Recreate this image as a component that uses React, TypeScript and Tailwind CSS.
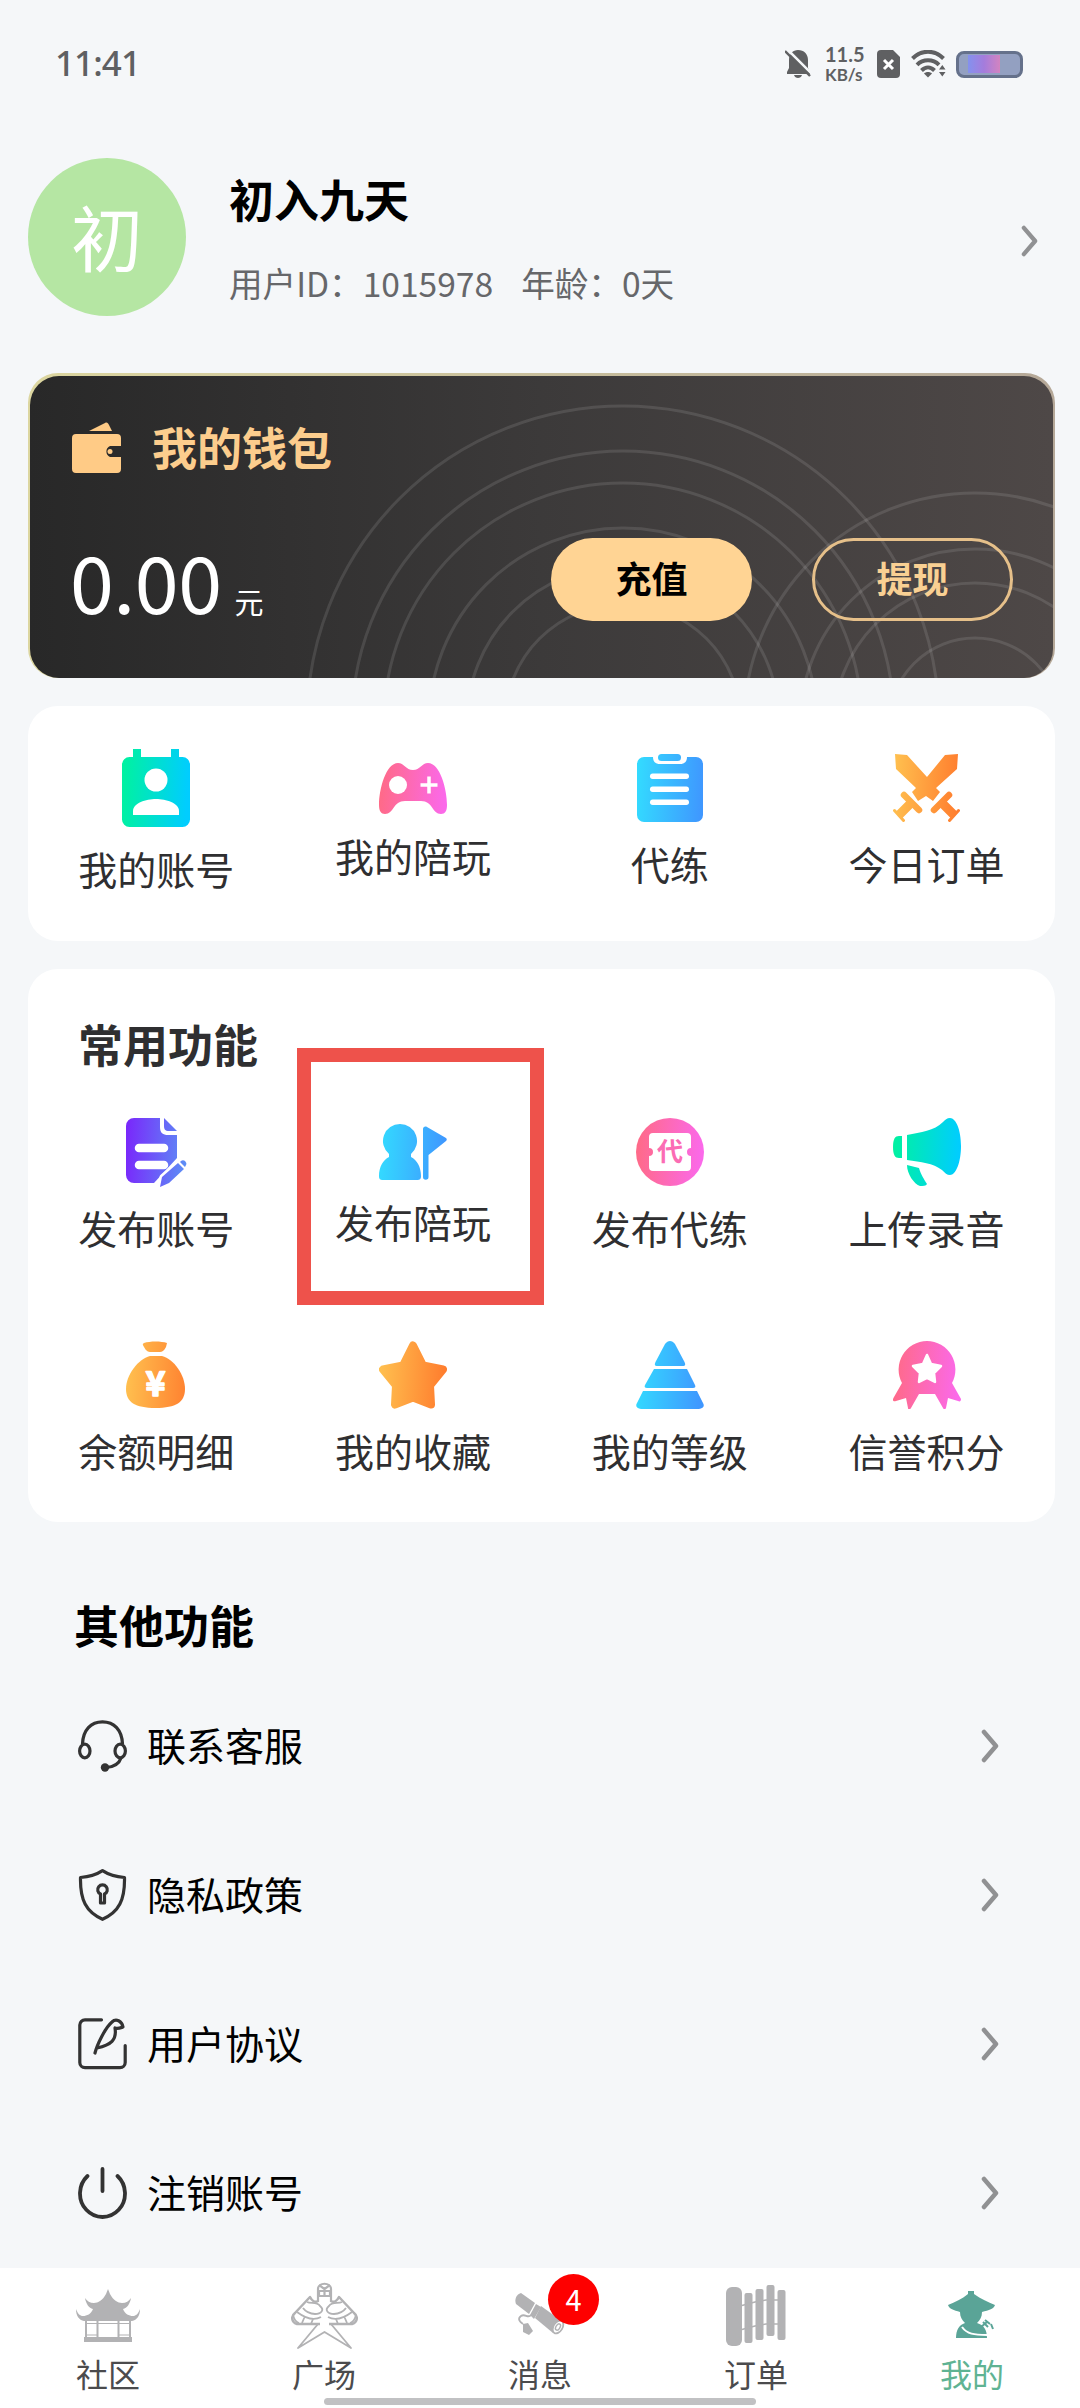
import type { ReactNode } from "react";

type Feature = {
    label: string;
    icon: ReactNode;
    offset: string;
};

type MenuEntry = {
    label: string;
    icon: ReactNode;
};

type Tab = {
    label: string;
    icon: ReactNode;
    badge?: number;
    active?: boolean;
};

const gradients = [
    { id: "g-green", from: "#00f39d", to: "#00cdff" },
    { id: "g-pink", from: "#ff6a84", to: "#fb69ea" },
    { id: "g-blue", from: "#33dcff", to: "#3f97ff" },
    { id: "g-orange", from: "#ffc250", to: "#ff7d2e" },
    { id: "g-purple", from: "#7a26fb", to: "#5a98f5" },
];

function GradientDefs() {
    return (
        <svg width="0" height="0" className="absolute">
            <defs>
                {gradients.map((g) => (
                    <linearGradient key={g.id} id={g.id} gradientUnits="userSpaceOnUse" x1="0" y1="0" x2="68" y2="4">
                        <stop offset="0" stopColor={g.from} />
                        <stop offset="1" stopColor={g.to} />
                    </linearGradient>
                ))}
            </defs>
        </svg>
    );
}

/* ---------- feature icons ---------- */

function AccountIcon() {
    return (
        <svg width="68" height="78" viewBox="0 0 68 78" fill="url(#g-green)">
            <path d="M11 0h8v8h30V0h8v8h3.500a7.500 7.500 0 0 1 7.500 7.500v55a7.500 7.500 0 0 1-7.500 7.500h-53A7.500 7.500 0 0 1 0 70.500v-55A7.500 7.500 0 0 1 7.500 8H11Z" />
            <circle cx="34" cy="31" r="11.500" fill="#fff" />
            <path d="M11 66v-4c0-8 13-12 23-12s23 4 23 12v4Z" fill="#fff" />
        </svg>
    );
}

function GamepadIcon() {
    return (
        <svg width="68" height="51" viewBox="0 0 68 51" fill="url(#g-pink)">
            <path d="M19 0c6 0 8 7 15 7s9-7 15-7c12 0 19 26 19 42 0 6-2 9-6 9-9 0-8-13-20-13H26C14 38 15 51 6 51c-4 0-6-3-6-9C0 26 7 0 19 0Z" />
            <circle cx="19" cy="22" r="9" fill="#fff" />
            <path d="M50 13.500v17M41.500 22h17" stroke="#fff" strokeWidth="3.500" />
        </svg>
    );
}

function ClipboardIcon() {
    return (
        <svg width="66" height="68" viewBox="0 0 66 68" fill="url(#g-blue)">
            <path d="M7 3h9c0 5 3 7 7 7h20c4 0 7-2 7-7h9a7 7 0 0 1 7 7v51a7 7 0 0 1-7 7H7a7 7 0 0 1-7-7V10a7 7 0 0 1 7-7Z" />
            <rect x="21" y="0" width="23" height="7" rx="3.500" />
            <g fill="#fff">
                <rect x="13" y="19.500" width="39" height="5.500" rx="2.700" />
                <rect x="13" y="32.500" width="39" height="5.500" rx="2.700" />
                <rect x="13" y="45.500" width="39" height="5.500" rx="2.700" />
            </g>
        </svg>
    );
}

function SwordsIcon() {
    return (
        <svg width="67" height="68" viewBox="0 0 67 68" fill="url(#g-orange)">
            <path d="M2 0l12 1 20 22L52 1l13-1-1 15-21 19 4 4-7 9-7-5-8 5-6-9 4-4L3 15Z" />
            <g stroke="url(#g-orange)" strokeLinecap="round">
                <path d="M11 41l15 15M56 41L41 56" strokeWidth="6.500" />
                <path d="M18 49L6 61M49 49l12 12" strokeWidth="9" strokeLinecap="butt" />
                <path d="M1.500 56.500l9 10M65.500 56.500l-9 10" strokeWidth="3" />
            </g>
        </svg>
    );
}

function PostAccountIcon() {
    return (
        <svg width="61" height="70" viewBox="0 0 61 70" fill="url(#g-purple)" className="-mb-0.5">
            <path d="M8 0h26v9c0 6 3 8 8 8h9v23L28 65H8a8 8 0 0 1-8-8V8a8 8 0 0 1 8-8Z" />
            <path d="M38 0l13 13h-8c-4 0-5-2-5-5Z" />
            <path d="M13 30h25M13 47h25" stroke="#fff" strokeWidth="8.500" strokeLinecap="round" />
            {/* pencil with a white outline that cuts it out of the sheet */}
            <path
                d="M52 45l6 6-15 14-9 4 2-10ZM55 43c1-1 3-1 4 0s2 3 1 4l-1 2-5-5Z"
                stroke="#fff"
                strokeWidth="5"
                strokeLinejoin="round"
                paintOrder="stroke"
            />
        </svg>
    );
}

function CompanionIcon() {
    return (
        <svg width="68" height="56" viewBox="0 0 68 56" fill="url(#g-blue)">
            <path d="M21 0a17 17 0 0 1 11 30v3c6 3 10 10 10 19 0 3-1 4-4 4H4c-3 0-4-1-4-4 0-9 4-16 10-19v-3A17 17 0 0 1 21 0Z" />
            <path d="M44 5c0-2 2-3 4-2l19 11c1 1 1 2 0 3L49.500 31v22a2.750 2.750 0 0 1-5.500 0Z" />
        </svg>
    );
}

function TicketIcon() {
    return (
        <svg width="68" height="68" viewBox="0 0 68 68">
            <circle cx="34" cy="34" r="34" fill="url(#g-pink)" />
            <path
                d="M17 15h34a4 4 0 0 1 4 4v11a4 4 0 0 0 0 8v11a4 4 0 0 1-4 4H17a4 4 0 0 1-4-4V38a4 4 0 0 0 0-8V19a4 4 0 0 1 4-4Z"
                fill="#fff"
            />
            <text x="34" y="43" fontSize="26" fontWeight="700" textAnchor="middle" fill="#fb6cb4">
                代
            </text>
        </svg>
    );
}

function MegaphoneIcon() {
    return (
        <svg width="68" height="68" viewBox="0 0 68 68" fill="url(#g-green)">
            <path d="M9 18v22H6c-4 0-6-3-6-11S2 18 6 18Z" />
            <path d="M14 17c14-3 27-4 36-13 2-2 4-4 7-4 6 0 11 12 11 28S63 57 57 57c-3 0-5-2-8-5-9-7-21-8-35-10Z" />
            <path d="M14 47l12 3c2 7 5 11 8 16-1 2-4 2-7 2-6-2-13-12-13-21Z" />
        </svg>
    );
}

function MoneyBagIcon() {
    return (
        <svg width="60" height="68" viewBox="0 0 60 68" fill="url(#g-orange)">
            <path d="M18 2c6-2 17-2 23 0l-1 4c-2 4-4 5-6 5h-9c-3 0-5-1-7-5-1-2-2-3 0-4Z" />
            <path d="M24 15h12c12 3 23 19 23 33 0 13-9 19-29.500 19S0 61 0 48c0-14 12-30 24-33Z" />
            <text x="29.500" y="54.500" fontSize="34" fontWeight="700" textAnchor="middle" fill="#fff" stroke="#fff" strokeWidth="1.500" strokeLinejoin="round">
                ¥
            </text>
        </svg>
    );
}

function StarIcon() {
    return (
        <svg width="68" height="68" viewBox="0 0 68 68">
            <path
                d="M34 4.500l10 20 20 4-13 16 1 19-18-7-18 7 1-19-13-16 20-4Z"
                fill="url(#g-orange)"
                stroke="url(#g-orange)"
                strokeWidth="8"
                strokeLinejoin="round"
            />
        </svg>
    );
}

function PyramidIcon() {
    return (
        <svg width="68" height="68" viewBox="0 0 68 68" fill="url(#g-blue)">
            <path d="M29 3c3-4 7-4 10 0l9.500 18c1 2 1 4-1 4h-27c-2 0-2-2-1-4Z" />
            <path d="M18 28h33l8 16c1 2 0 3-2 3H11c-2 0-3-1-2-3Z" />
            <path d="M7 50h54l6 12c2 3 0 6-4 6H5c-4 0-6-3-4-6Z" />
        </svg>
    );
}

function MedalIcon() {
    return (
        <svg width="68" height="68" viewBox="0 0 68 68" fill="url(#g-pink)">
            <path d="M34 0a28.500 28.500 0 0 1 25 42l9 16c0 2-1 3-3 2l-10-3-2 10c-1 2-2 2-3 0l-8-14H26l-8 14c-1 2-3 2-3 0l-2-10-10 3c-3 1-4-1-2-4l8-14A28.500 28.500 0 0 1 34 0Z" />
            <path
                d="M34 14l4 9 10 2-7 7 1 9-8-4-8 4 1-9-7-7 10-2Z"
                fill="#fff"
                stroke="#fff"
                strokeWidth="2.500"
                strokeLinejoin="round"
            />
        </svg>
    );
}

/* ---------- list icons ---------- */

function HeadsetIcon() {
    return (
        <svg width="49" height="52" viewBox="0 0 49 52" fill="none" stroke="#333" strokeWidth="3.200">
            <ellipse cx="6.800" cy="31" rx="5.200" ry="6.800" />
            <ellipse cx="42.200" cy="31" rx="5.200" ry="6.800" />
            <path d="M4.500 24C5 10 13 1.800 24.500 1.800S44 10 44.500 24M43 38c-2 6-7 9-15 9.500" />
            <circle cx="27" cy="47.500" r="4.200" fill="#333" stroke="none" />
        </svg>
    );
}

function ShieldIcon() {
    return (
        <svg width="49" height="52" viewBox="0 0 49 52" fill="none" stroke="#333" strokeWidth="3.200" strokeLinejoin="round">
            <path d="M24.500 1.700C18 6 10 8 2.500 8.500 2 31 8 43 24.500 50.300 41 43 47 31 46.500 8.500 39 8 31 6 24.500 1.700Z" />
            <path d="M22.500 25a4.800 4.800 0 1 1 4 0v9h-4Z" />
        </svg>
    );
}

function QuillIcon() {
    return (
        <svg
            width="49"
            height="52"
            viewBox="0 0 49 52"
            fill="none"
            stroke="#333"
            strokeWidth="3.200"
            strokeLinecap="round"
            strokeLinejoin="round"
        >
            <path d="M23.500 1.800H7A5.200 5.200 0 0 0 1.800 7v37.500A5.200 5.200 0 0 0 7 49.700h35a5.200 5.200 0 0 0 5.200-5.200V27.500" />
            <path d="M17 35c2-8 10-25 17-31 4-4 10-1 11 5-3 1-5 2-8 1 2 12-4 17-18 20" />
        </svg>
    );
}

function PowerIcon() {
    return (
        <svg width="49" height="52" viewBox="0 0 49 52" fill="none" stroke="#333" strokeWidth="3.800" strokeLinecap="round">
            <path d="M24.500 2v22M9.500 9a22.500 23.500 0 1 0 30 0" />
        </svg>
    );
}

/* ---------- tab bar icons ---------- */

function PavilionIcon() {
    return (
        <svg width="64" height="53" viewBox="0 0 64 53" fill="#b2b2b4">
            <path d="M32 0l2 5c3 6 8 9 12 9 4 0 7-2 9-5-1 6-4 10-8 11 2 5 6 7 10 7 3 0 5-2 7-7 0 7-3 11-8 12H8c-5-1-8-5-8-12 2 5 4 7 7 7 4 0 8-2 10-7-4-1-7-5-8-11 2 3 5 5 9 5 4 0 9-3 12-9Z" />
            <path d="M8 48h48v5H8Z" />
            <path d="M10 32v16M21.500 32v16M42.500 32v16M54 32v16" stroke="#b2b2b4" strokeWidth="2" />
            <path d="M10 34.500h44M10 46h11M43 46h11" stroke="#b2b2b4" strokeWidth="1.200" />
        </svg>
    );
}

function KiteIcon() {
    return (
        <svg width="67" height="67" viewBox="0 0 67 67" fill="none" stroke="#b2b2b4" strokeWidth="1.800" strokeLinejoin="round">
            <path d="M27 20V7c0-7 13-7 13 0v13M28 3l5.500 4L39 3M28 9h11v5H28ZM33.500 9v5" strokeWidth="2.200" />
            <path d="M27 19c-3 2-6 0-8-4L4 31C0 34 0 40 6 42h23" strokeWidth="2.500" />
            <path d="M40 19c3 2 6 0 8-4l15 16c4 3 4 9-2 11H38" strokeWidth="2.500" />
            <path d="M16 20c4 2 10-1 13 4 5 4 1 8-5 8-5 0-10-3-12-6M6 30c8 6 17 9 24 5M2 33c1 4 2 7 6 8M14 34l-3 7M22 37l-2 5" />
            <path d="M51 20c-4 2-10-1-13 4-5 4-1 8 5 8 5 0 10-3 12-6M61 30c-8 6-17 9-24 5M65 33c-1 4-2 7-6 8M53 34l3 7M45 37l2 5" />
            <path d="M27 42L7 66l26.500-16L60 66 40 42" />
        </svg>
    );
}

function ScrollIcon() {
    return (
        <svg width="50" height="44" viewBox="0 0 50 44" fill="#b2b2b4">
            <path d="M6 0l14 10-6 11L1 11C-1 6 2 1 6 0Z" />
            <path d="M26 13l18 13-6 14-18-15Z" />
            <path d="M21 11l5 3-7 12-4-4Z" />
            <ellipse cx="43" cy="34" rx="4.500" ry="7" transform="rotate(32 43 34)" fill="#fff" stroke="#b2b2b4" strokeWidth="1.800" />
            <ellipse cx="43" cy="34" rx="2" ry="3.500" transform="rotate(32 43 34)" fill="none" stroke="#b2b2b4" strokeWidth="1.400" />
            <path d="M16 22c-3 4-6-2-10 1-4 3-1 6 2 8" fill="none" stroke="#b2b2b4" strokeWidth="1.800" />
            <path d="M8 31l5-1 5 8-4 4-6-3Z" />
        </svg>
    );
}

function BambooSlipsIcon() {
    return (
        <svg width="60" height="61" viewBox="0 0 60 61" fill="#b2b2b4">
            <rect x="0" y="2" width="16" height="59" rx="6" />
            <rect x="18.500" y="8" width="8" height="50" rx="2" />
            <rect x="29.500" y="4" width="8" height="51" rx="2" />
            <rect x="40.500" y="0" width="8" height="51" rx="2" />
            <rect x="51.500" y="5" width="8" height="50" rx="2" />
            <path d="M14 21l15-4 11-2h12M14 45l15-4 11-2h12" fill="none" stroke="#b2b2b4" strokeWidth="1.500" />
        </svg>
    );
}

function SwordsmanIcon() {
    return (
        <svg width="48" height="48" viewBox="0 0 48 48" fill="#5aa497">
            <path d="M20 0h6v3c7 5 14 8 21 11-1 4-6 5-13 7 0 5-2 8-5 11 7 2 10 7 10 15H8c0-8 3-13 9-15-3-3-5-6-5-11C6 19 1 18 0 14 7 11 14 8 20 3Z" />
            <path d="M14 36c5 7 12 8 25 8" fill="none" stroke="#fff" strokeWidth="2" />
            <path d="M33 36l6-5M35 31l5 5M37 29l5 4M43 33l2 5" stroke="#5aa497" strokeWidth="2" />
        </svg>
    );
}

function Chevron({ className }: { className: string }) {
    return (
        <svg className={className} viewBox="0 0 18 34" fill="none" stroke="#909193" strokeWidth="4.500" strokeLinecap="round" strokeLinejoin="round">
            <path d="M3 3l12 14L3 31" />
        </svg>
    );
}

const quickFeatures: Feature[] = [
    { label: "我的账号", icon: <AccountIcon />, offset: "pt-[43px]" },
    { label: "我的陪玩", icon: <GamepadIcon />, offset: "pt-[57px]" },
    { label: "代练", icon: <ClipboardIcon />, offset: "pt-12" },
    { label: "今日订单", icon: <SwordsIcon />, offset: "pt-12" },
];

const commonFeatures: Feature[] = [
    { label: "发布账号", icon: <PostAccountIcon />, offset: "pt-[43px]" },
    { label: "发布陪玩", icon: <CompanionIcon />, offset: "pt-[49px]" },
    { label: "发布代练", icon: <TicketIcon />, offset: "pt-[43px]" },
    { label: "上传录音", icon: <MegaphoneIcon />, offset: "pt-[43px]" },
    { label: "余额明细", icon: <MoneyBagIcon />, offset: "pt-[43px]" },
    { label: "我的收藏", icon: <StarIcon />, offset: "pt-[43px]" },
    { label: "我的等级", icon: <PyramidIcon />, offset: "pt-[43px]" },
    { label: "信誉积分", icon: <MedalIcon />, offset: "pt-[43px]" },
];

const menuEntries: MenuEntry[] = [
    { label: "联系客服", icon: <HeadsetIcon /> },
    { label: "隐私政策", icon: <ShieldIcon /> },
    { label: "用户协议", icon: <QuillIcon /> },
    { label: "注销账号", icon: <PowerIcon /> },
];

const tabs: Tab[] = [
    { label: "社区", icon: <PavilionIcon /> },
    { label: "广场", icon: <KiteIcon /> },
    { label: "消息", icon: <ScrollIcon />, badge: 4 },
    { label: "订单", icon: <BambooSlipsIcon /> },
    { label: "我的", icon: <SwordsmanIcon />, active: true },
];

function StatusBar() {
    return (
        <div className="flex h-[128px] items-center justify-between pl-[55px] pr-[57px] text-[#5f6062]">
            <span className="pb-[3px] font-['Noto_Sans','Noto_Sans_CJK_SC',sans-serif] text-[35px] font-medium leading-none tracking-[-0.9px]">
                11:41
            </span>
            <div className="flex items-center">
                <svg width="26" height="30" viewBox="0 0 26 30" fill="#5f6062">
                    <path d="M13 1c6 0 10 4 10 10v8l2 4v2H2v-2l2-4v-8C4 5 8 1 13 1ZM9 26h8c-1 4-7 4-8 0Z" />
                    <path d="M2 0l25 25" stroke="#f5f7f9" strokeWidth="2.500" />
                    <path d="M0 2l25 25" stroke="#5f6062" strokeWidth="2.400" />
                </svg>
                <div className="ml-[14px] flex w-[39px] flex-col font-['Lato',sans-serif] font-bold">
                    <span className="text-[20px] leading-[22px]">11.5</span>
                    <span className="whitespace-nowrap text-[17px] leading-[20px]">KB/s</span>
                </div>
                <svg className="ml-[13px]" width="23" height="28" viewBox="0 0 23 28">
                    <path d="M4 0h12l7 7v17a4 4 0 0 1-4 4H4a4 4 0 0 1-4-4V4a4 4 0 0 1 4-4Z" fill="#5f6062" />
                    <path d="M7 10l9 9M16 10l-9 9" stroke="#fff" strokeWidth="3" />
                </svg>
                <svg className="ml-[11px]" width="35" height="28" viewBox="0 0 35 28" fill="none" stroke="#5f6062" strokeWidth="4">
                    <path d="M1.500 8.500c9-9 22-9 31 0M6 14.800c6-6 16-6 22 0M10.500 20.500c4-4 9-4 13 0" />
                    <path d="M17 27.500l-4-4c2-2 6-2 8 0Z" fill="#5f6062" stroke="none" />
                    <path d="M28 19.500h6.500l-3.200-4.500ZM28 22h6.500l-3.200 4.500Z" fill="#5f6062" stroke="none" />
                </svg>
                <div className="ml-[10px] flex h-[27px] w-[67px] items-center rounded-[8px] border-[3px] border-[#65718b] bg-[#93a0c1] pl-[9px]">
                    <div className="h-[18px] w-8 bg-linear-to-r from-[#8391ee] via-[#a47cdc] to-[#d283c0]" />
                </div>
            </div>
        </div>
    );
}

function Profile() {
    return (
        <div className="flex h-[245px] items-start pl-7 pt-[30px]">
            <div className="flex size-[158px] items-center justify-center rounded-full bg-[#b5e6a3] pb-[5px] text-[72px] leading-none text-white">
                初
            </div>
            <div className="ml-[43px] flex-1">
                <h1 className="mt-[16px] text-[45px] font-bold leading-[50px] text-black">初入九天</h1>
                <p className="mt-[34px] flex gap-[28px] text-[33.600px] leading-[50px] text-[#66676a]">
                    <span>用户ID：1015978</span>
                    <span>年龄：0天</span>
                </p>
            </div>
            <Chevron className="mr-[42px] mt-[67px] h-8 w-[17px]" />
        </div>
    );
}

function WalletCard() {
    return (
        <section className="ml-7 mr-[25px] h-[305px] rounded-[30px] bg-linear-to-r from-[#dcd6a0] to-[#b5a898] px-[2px] pt-[3px]">
            <div className="relative h-full overflow-hidden rounded-[29px] bg-linear-to-r from-[#282828] via-[#3c3a3a] to-[#4e4847]">
                {/* ripple pattern behind the balance */}
                <svg
                    className="absolute inset-0"
                    width="1023"
                    height="302"
                    viewBox="30 376 1023 302"
                    fill="none"
                    stroke="#fff"
                    strokeOpacity="0.11"
                    strokeWidth="3"
                >
                    {[316, 271, 239, 194, 156, 118].map((r) => (
                        <circle key={r} cx="623" cy="722" r={r} />
                    ))}
                    {[231, 175, 141, 86].map((r) => (
                        <circle key={r} cx="975" cy="724" r={r} />
                    ))}
                </svg>
                <div className="relative flex h-full flex-col pl-[42px] pr-10">
                    <div className="mt-[44px] flex h-[54px] items-center">
                        <svg width="49" height="51" viewBox="0 0 49 51" fill="#ffcb86">
                            <path d="M17 9L33 1c2-1 3 0 4 2l3 6Z" />
                            <path d="M4 12h41a4 4 0 0 1 4 4v8H38a6 6 0 0 0 0 11h11v12a4 4 0 0 1-4 4H4a4 4 0 0 1-4-4V16a4 4 0 0 1 4-4Z" />
                            <circle cx="38" cy="29.500" r="2.500" />
                        </svg>
                        <h2 className="ml-[31px] pb-0.5 text-[45px] font-bold leading-none text-[#fccd8d]">我的钱包</h2>
                    </div>
                    <div className="mt-[64px] flex h-[83px] items-center">
                        <div className="flex flex-1 items-baseline text-white">
                            <span className="-ml-0.5 text-[79px] leading-[83px] tracking-[-0.5px]">0.00</span>
                            <span className="ml-[13px] text-[29px] leading-none">元</span>
                        </div>
                        <button className="h-[83px] w-[201px] rounded-full bg-[#ffd494] pb-[5px] text-[36px] font-bold leading-none text-black">
                            充值
                        </button>
                        <button className="ml-[60px] h-[83px] w-[201px] rounded-full border-[3px] border-[#e6c08a] pb-[5px] text-[36px] font-bold leading-none text-[#f9d093]">
                            提现
                        </button>
                    </div>
                </div>
            </div>
        </section>
    );
}

function FeatureItem({ feature }: { feature: Feature }) {
    return (
        <div className={`flex flex-col items-center ${feature.offset}`}>
            {feature.icon}
            <span className="mt-[21px] text-[39px] leading-[40px] text-[#2f2f31]">{feature.label}</span>
        </div>
    );
}

function MenuRow({ entry }: { entry: MenuEntry }) {
    return (
        <div className="flex h-[149px] items-center pl-[78px] pr-[81px]">
            {entry.icon}
            <span className="ml-5 flex-1 pb-0.5 text-[39px] leading-none text-black">{entry.label}</span>
            <Chevron className="h-[34px] w-[18px]" />
        </div>
    );
}

function TabBar() {
    return (
        <nav className="relative grid h-[140px] grid-cols-5 bg-white">
            {tabs.map((tab) => (
                <div key={tab.label} className="flex flex-col items-center">
                    <div className="relative mt-[10px] flex h-[74px] items-center">
                        {tab.icon}
                        {tab.badge && (
                            <span className="absolute left-[33px] top-[-4px] flex size-[51px] items-center justify-center rounded-full bg-[#fe0000] pb-0.5 text-[29px] leading-none text-white">
                                {tab.badge}
                            </span>
                        )}
                    </div>
                    <span className={`mt-[3px] text-[32px] leading-[36px] ${tab.active ? "text-[#5fb393]" : "text-[#4b4b4d]"}`}>
                        {tab.label}
                    </span>
                </div>
            ))}
            <div className="absolute bottom-[3px] left-[324px] h-[7px] w-[432px] rounded-full bg-[#c1c1c3]" />
        </nav>
    );
}

export default function App() {
    return (
        <div className="flex h-[2408px] w-[1080px] flex-col overflow-hidden bg-[#f5f7f9] font-['Noto_Sans_CJK_SC',sans-serif]">
            <GradientDefs />
            <StatusBar />
            <Profile />
            <WalletCard />

            <section className="ml-7 mr-[25px] mt-7 grid h-[235px] shrink-0 grid-cols-4 rounded-[30px] bg-white">
                {quickFeatures.map((f) => (
                    <FeatureItem key={f.label} feature={f} />
                ))}
            </section>

            <section className="relative ml-7 mr-[25px] mt-7 h-[553px] shrink-0 rounded-[30px] bg-white pt-[45px]">
                <h2 className="pb-px pl-[50px] text-[45px] font-bold leading-[60px] text-[#2f2f31]">常用功能</h2>
                <div className="grid auto-rows-[223px] grid-cols-4">
                    {commonFeatures.map((f) => (
                        <FeatureItem key={f.label} feature={f} />
                    ))}
                </div>
                {/* highlight frame around the publish entry */}
                <div className="absolute left-[269px] top-[79px] h-[257px] w-[247px] border-[14px] border-[#ee524b]" />
            </section>

            <section className="flex-1">
                <h2 className="pl-[74px] pt-[73px] text-[45px] font-bold leading-[60px] text-black">其他功能</h2>
                <div className="mt-[16px]">
                    {menuEntries.map((e) => (
                        <MenuRow key={e.label} entry={e} />
                    ))}
                </div>
            </section>

            <TabBar />
        </div>
    );
}
